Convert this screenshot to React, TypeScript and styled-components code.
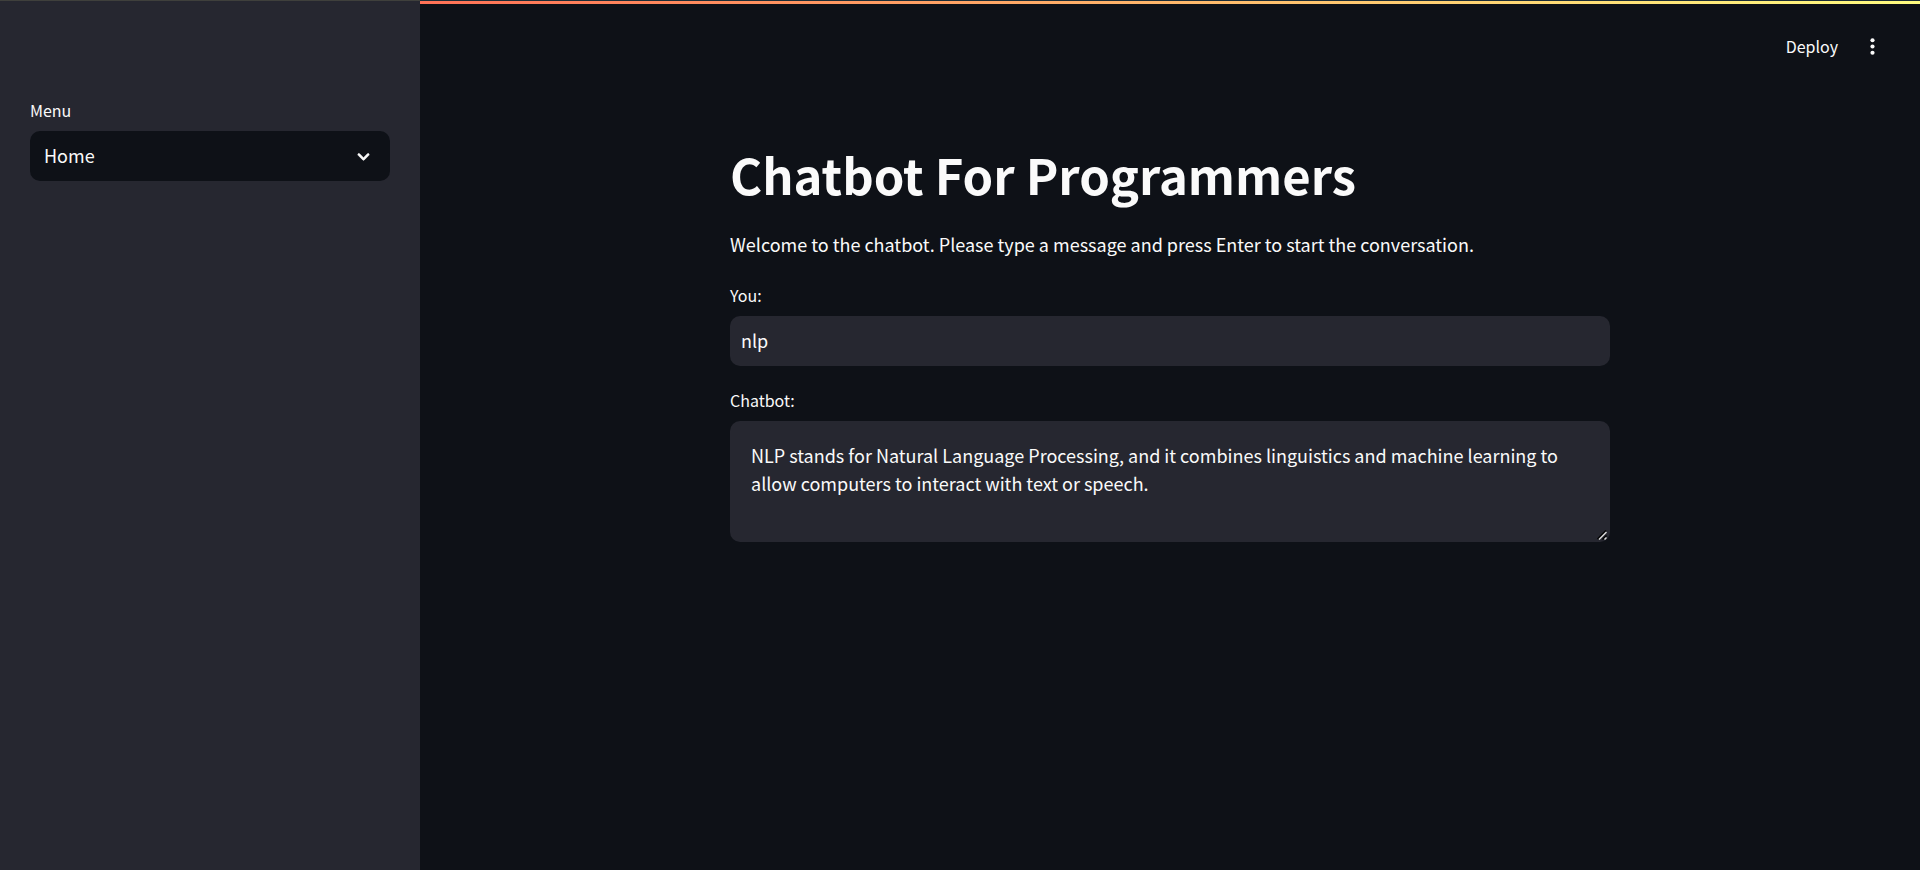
import React, { useState } from "react";
import styled, { createGlobalStyle } from "styled-components";

const GlobalStyle = createGlobalStyle`
  *, *::before, *::after { box-sizing: border-box; }
  body {
    margin: 0;
    background: #0e1117;
    color: #fafafa;
    font-family: "Noto Sans CJK SC", "Noto Sans", sans-serif;
    font-size: 18px;
    line-height: 28px;
    color-scheme: dark;
  }
  button, input, select, textarea { font: inherit; color: inherit; }
`;

const Shell = styled.div`
  display: flex;
  min-height: 100vh;
  position: relative;
`;

const Decoration = styled.div`
  position: absolute;
  inset: 1px 0 auto 0;
  height: 3px;
  background: linear-gradient(90deg, #ff4b4b, #fffd80);
`;

const Sidebar = styled.aside`
  position: relative;
  flex: 0 0 420px;
  padding: 97px 30px 30px;
  border-top: 1px solid #3f403c;
  background: #262730;
`;

const Main = styled.main`
  flex: 1;
  min-width: 0;
  display: flex;
  flex-direction: column;
  border-top: 1px solid #1c2e38;
`;

const Toolbar = styled.header`
  display: flex;
  justify-content: flex-end;
  align-items: center;
  gap: 22px;
  height: 76px;
  margin-top: 7px;
  padding: 0 35px 0 24px;
`;

const ToolbarButton = styled.button`
  display: flex;
  align-items: center;
  border: 0;
  padding: 0;
  background: none;
  font-size: 16px;
  line-height: 24px;
  cursor: pointer;
`;

const Content = styled.div`
  width: 100%;
  max-width: 880px;
  margin: 0 auto;
  padding: 58px 0 40px;
  display: flex;
  flex-direction: column;
  gap: 22px;
`;

const Title = styled.h1`
  margin: 0 0 2px;
  font-size: 49px;
  line-height: 64px;
  font-weight: 700;
`;

const Intro = styled.p`
  margin: 0 0 3px;
`;

const Field = styled.div`
  display: flex;
  flex-direction: column;
  gap: 9px;
`;

const Label = styled.label`
  font-size: 16px;
  line-height: 24px;
`;

const SelectFrame = styled.div`
  display: grid;
  align-items: center;
  > * { grid-area: 1 / 1; }
  > svg { justify-self: end; margin-right: 14px; pointer-events: none; }
`;

const Select = styled.select`
  appearance: none;
  width: 100%;
  height: 50px;
  padding: 0 48px 2px 14px;
  border: 0;
  border-radius: 10px;
  background: #0e1117;
`;

const TextInput = styled.input`
  width: 100%;
  height: 50px;
  padding: 0 11px 2px;
  border: 0;
  border-radius: 10px;
  background: #262730;
`;

const TextAreaFrame = styled.div`
  display: grid;
  > * { grid-area: 1 / 1; }
  > svg { place-self: end; margin: 0 3px 2px 0; pointer-events: none; }
`;

const TextArea = styled.textarea`
  display: block;
  width: 100%;
  height: 121px;
  padding: 20px 21px;
  border: 0;
  border-radius: 10px;
  background: #262730;
  resize: vertical;
  &::-webkit-resizer { background: transparent; }
`;

const ChevronIcon = () => (
  <svg width="25" height="25" viewBox="0 0 24 24" fill="#fafafa" stroke="#fafafa" strokeWidth="0.6" aria-hidden="true">
    <path d="M12.7071 15.2929L17.1464 10.8536C17.5369 10.4631 17.5369 9.8299 17.1464 9.4393C16.7559 9.0488 16.1227 9.0488 15.7322 9.4393L12 13.1716L8.2678 9.4393C7.8772 9.0488 7.2441 9.0488 6.8536 9.4393C6.463 9.8299 6.463 10.4631 6.8536 10.8536L11.2929 15.2929C11.6834 15.6834 12.3166 15.6834 12.7071 15.2929Z" />
  </svg>
);

const MenuIcon = () => (
  <svg width="25" height="25" viewBox="0 0 24 24" fill="#fafafa" aria-hidden="true">
    <circle cx="12" cy="6" r="2" />
    <circle cx="12" cy="12" r="2" />
    <circle cx="12" cy="18" r="2" />
  </svg>
);

const ResizeGrip = () => (
  <svg width="10" height="10" viewBox="0 0 10 10" fill="none" aria-hidden="true">
    <path d="M0.5 9L9 0.5M5.5 9.5L9.5 5.5" stroke="#000" strokeWidth="1.5" />
    <path d="M2 9.5L9.5 2M7.5 9.5L9.5 7.5" stroke="#d8d8d8" strokeWidth="1.5" />
  </svg>
);

export default function App() {
  const [page, setPage] = useState("Home");
  const [message, setMessage] = useState("nlp");
  const [reply, setReply] = useState(
    "NLP stands for Natural Language Processing, and it combines linguistics and machine learning to allow computers to interact with text or speech."
  );

  return (
    <>
      <GlobalStyle />
      <Shell>
        <Decoration />
        <Sidebar>
          <Field>
            <Label htmlFor="menu">Menu</Label>
            <SelectFrame>
              <Select id="menu" value={page} onChange={(e) => setPage(e.target.value)}>
                <option>Home</option>
              </Select>
              <ChevronIcon />
            </SelectFrame>
          </Field>
        </Sidebar>
        <Main>
          <Toolbar>
            <ToolbarButton type="button">Deploy</ToolbarButton>
            <ToolbarButton type="button" aria-label="Main menu">
              <MenuIcon />
            </ToolbarButton>
          </Toolbar>
          <Content>
            <Title>Chatbot For Programmers</Title>
            <Intro>Welcome to the chatbot. Please type a message and press Enter to start the conversation.</Intro>
            <Field>
              <Label htmlFor="message">You:</Label>
              <TextInput id="message" value={message} onChange={(e) => setMessage(e.target.value)} />
            </Field>
            <Field>
              <Label htmlFor="reply">Chatbot:</Label>
              <TextAreaFrame>
                <TextArea id="reply" value={reply} onChange={(e) => setReply(e.target.value)} />
                <ResizeGrip />
              </TextAreaFrame>
            </Field>
          </Content>
        </Main>
      </Shell>
    </>
  );
}
